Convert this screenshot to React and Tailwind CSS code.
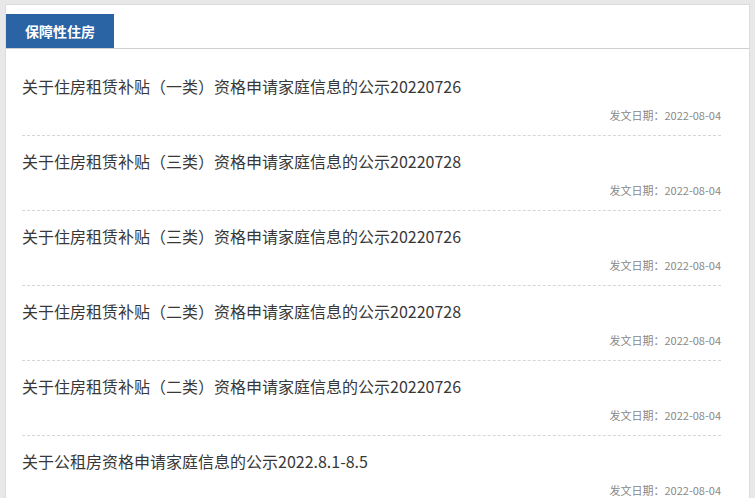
import React from "react";

const items = [
  "关于住房租赁补贴（一类）资格申请家庭信息的公示20220726",
  "关于住房租赁补贴（三类）资格申请家庭信息的公示20220728",
  "关于住房租赁补贴（三类）资格申请家庭信息的公示20220726",
  "关于住房租赁补贴（二类）资格申请家庭信息的公示20220728",
  "关于住房租赁补贴（二类）资格申请家庭信息的公示20220726",
  "关于公租房资格申请家庭信息的公示2022.8.1-8.5",
];

const App = () => {
  return (
    <div
      className="min-h-screen bg-[#e8e8e8] pt-[4px] pl-[5px] pr-[5px]"
      style={{ fontFamily: '"Microsoft YaHei", "Noto Sans CJK SC", sans-serif' }}
    >
      <div className="bg-white border border-[#dcdcdc]">
        {/* tab header */}
        <div className="pt-[9px] border-b border-[#cfcfcf] flex">
          <div className="w-[108px] h-[34px] bg-[#2b64a5] text-white text-[14px] font-bold flex items-center justify-center">
            保障性住房
          </div>
        </div>

        {/* list */}
        <ul className="pt-[12px] pl-[16px] pr-[28px]">
          {items.map((t, i) => (
            <li
              key={i}
              className="pt-[13px] pb-[12px] border-b border-dashed border-[#d6d6d6]"
            >
              <a className="block text-[16px] leading-[24px] text-[#383838] truncate">
                {t}
              </a>
              <div className="mt-[9px] text-right text-[11px] leading-[16px] text-[#888]">
                发文日期：2022-08-04
              </div>
            </li>
          ))}
        </ul>
      </div>
    </div>
  );
};

export default App;
